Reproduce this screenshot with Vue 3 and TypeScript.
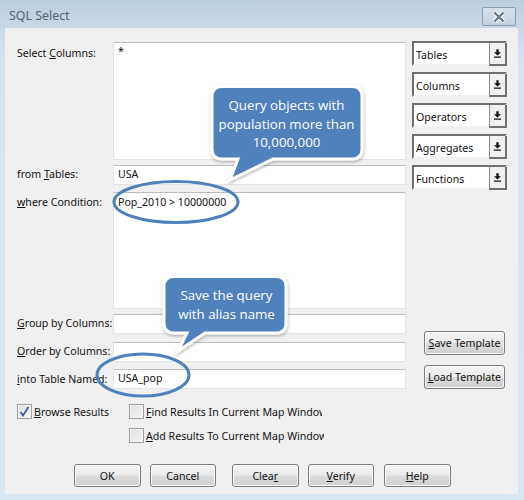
<template>
  <div class="window">
    <div class="titlebar">
      <span class="title">SQL Select</span>
      <button class="close-button" aria-label="Close">
        <svg width="14" height="12" viewBox="0 0 14 12">
          <path d="M2.5 1.5 L11.5 10.5 M11.5 1.5 L2.5 10.5" stroke="#fff" stroke-width="4.4" />
          <path d="M2.5 1.5 L11.5 10.5 M11.5 1.5 L2.5 10.5" stroke="#6d7a8a" stroke-width="2.4" />
        </svg>
      </button>
    </div>

    <div class="client">
      <div class="main">
        <div class="fields">
          <div class="row row-select">
            <label class="label"><span>Select <u>C</u>olumns:</span></label>
            <div class="box">*</div>
          </div>
          <div class="row row-from">
            <label class="label"><span>from <u>T</u>ables:</span></label>
            <div class="box">USA</div>
          </div>
          <div class="row row-where">
            <label class="label"><span><u>w</u>here Condition:</span></label>
            <div class="box">Pop_2010 &gt; 10000000</div>
          </div>
          <div class="row row-group">
            <label class="label"><span><u>G</u>roup by Columns:</span></label>
            <div class="box"></div>
          </div>
          <div class="row row-order">
            <label class="label"><span><u>O</u>rder by Columns:</span></label>
            <div class="box"></div>
          </div>
          <div class="row row-into">
            <label class="label"><span><u>i</u>nto Table Named:</span></label>
            <div class="box">USA_pop</div>
          </div>
        </div>

        <div class="side">
          <div class="dropdowns">
            <div v-for="name in dropdowns" :key="name" class="dropdown">
              <span class="dropdown-text">{{ name }}</span>
              <span class="dropdown-arrow">
                <svg width="7" height="9" viewBox="0 0 9 11">
                  <path d="M3 0 H6 V4 H9 L4.5 8 L0 4 H3 Z M0 9.5 H9 V11 H0 Z" fill="#111" />
                </svg>
              </span>
            </div>
          </div>
          <div class="templates">
            <button class="btn btn-template"><u>S</u>ave Template</button>
            <button class="btn btn-template"><u>L</u>oad Template</button>
          </div>
        </div>
      </div>

      <div class="options">
        <div class="check check-browse">
          <span class="checkbox">
            <svg width="11" height="11" viewBox="0 0 11 11">
              <path d="M1.5 6 L4 9.5 L9.5 1" fill="none" stroke="#3f5f9c" stroke-width="1.8" />
            </svg>
          </span>
          <span><u>B</u>rowse Results</span>
        </div>
        <div class="check-col">
          <div class="check check-find">
            <span class="checkbox"></span>
            <span class="clip"><u>F</u>ind Results In Current Map Window</span>
          </div>
          <div class="check check-add">
            <span class="checkbox"></span>
            <span class="clip"><u>A</u>dd Results To Current Map Window</span>
          </div>
        </div>
      </div>

      <div class="actions">
        <button class="btn btn-action">OK</button>
        <button class="btn btn-action gap-small">Cancel</button>
        <button class="btn btn-action gap-large">Clea<u>r</u></button>
        <button class="btn btn-action gap-small"><u>V</u>erify</button>
        <button class="btn btn-action gap-help"><u>H</u>elp</button>
      </div>
    </div>

    <!-- annotations drawn over the dialog -->
    <svg class="overlay" width="524" height="500" viewBox="0 0 524 500">
      <defs>
        <filter id="soft" x="-10%" y="-10%" width="120%" height="125%">
          <feDropShadow dx="0.5" dy="1.5" stdDeviation="1.5" flood-color="#000" flood-opacity="0.3" />
        </filter>
      </defs>
      <path
        d="M222 86.5 H352 Q362 86.5 362 96.5 V149 Q362 159 352 159 H273 L230 180 L238 159 H222 Q212 159 212 149 V96.5 Q212 86.5 222 86.5 Z"
        fill="#4f81bd" stroke="#fff" stroke-width="3" filter="url(#soft)"
      />
      <path
        d="M174 276.5 H276 Q286 276.5 286 286.5 V323 Q286 333 276 333 H205 L178 351 L187 333 H174 Q164 333 164 323 V286.5 Q164 276.5 174 276.5 Z"
        fill="#4f81bd" stroke="#fff" stroke-width="3" filter="url(#soft)"
      />
      <ellipse cx="176" cy="202" rx="62" ry="20.5" fill="none" stroke="#4f81bd" stroke-width="3" />
      <ellipse cx="143" cy="375" rx="46" ry="21" fill="none" stroke="#4f81bd" stroke-width="3" />
    </svg>

    <div class="callout callout-query">Query objects with<br />population more than<br />10,000,000</div>
    <div class="callout callout-save">Save the query<br />with alias name</div>
  </div>
</template>

<script setup lang="ts">
const dropdowns: string[] = ['Tables', 'Columns', 'Operators', 'Aggregates', 'Functions']
</script>

<style>
html,
body {
  margin: 0;
  background: #d6e4f2;
}
</style>

<style scoped>
.window {
  position: relative;
  width: 524px;
  height: 500px;
  box-sizing: border-box;
  padding: 0 6px 6px 5px;
  display: flex;
  flex-direction: column;
  overflow: hidden;
  font-family: "Noto Sans", "Liberation Sans", sans-serif;
  font-size: 10.6px;
  color: #111;
  background: linear-gradient(180deg, #bccddd 0, #c9d8e7 28px, #d6e4f2 60px, #d9e6f3 100%);
}

.titlebar {
  height: 28px;
  flex: none;
  display: flex;
  align-items: flex-start;
  justify-content: space-between;
  padding: 0 2px 0 4px;
}

.title {
  margin-top: 7px;
  font-size: 12.4px;
  color: #59636f;
}

.close-button {
  width: 34px;
  height: 19px;
  margin-top: 7px;
  padding: 0;
  display: flex;
  align-items: center;
  justify-content: center;
  border: 1px solid #8a9db3;
  border-radius: 2px;
  background: linear-gradient(180deg, #d8e2ec, #c3d0de);
}

.client {
  flex: 1;
  background: #f0f0f0;
  display: flex;
  flex-direction: column;
}

.main {
  display: flex;
  padding-top: 14px;
}

.fields {
  width: 401px;
  flex: none;
  display: flex;
  flex-direction: column;
}

.row {
  display: flex;
}

.label {
  width: 108px;
  flex: none;
  box-sizing: border-box;
  padding-left: 12px;
  white-space: nowrap;
}

.box {
  flex: 1;
  box-sizing: border-box;
  background: #fff;
  border: 1px solid #e4e4e8;
  border-top-color: #bdbdbd;
  padding: 1px 4px;
  line-height: 14px;
}

.row-select .box { height: 118px; }
.row-select .label { padding-top: 4px; }
.row-from { margin-top: 5px; align-items: center; }
.row-from .box { height: 20px; }
.row-from .label { padding-bottom: 3px; }
.row-where { margin-top: 7px; }
.row-where .label { padding-top: 3px; }
.row-where .box { height: 117px; padding-top: 2px; }
.row-group { margin-top: 5px; align-items: center; }
.row-group .box { height: 20px; }
.row-group .label { padding-bottom: 3px; }
.row-order { margin-top: 8px; align-items: center; }
.row-order .box { height: 20px; }
.row-order .label { padding-bottom: 3px; }
.row-into { margin-top: 7px; align-items: center; }
.row-into .box { height: 20px; }
.row-into .label { padding-bottom: 1px; }

.side {
  flex: 1;
  display: flex;
  flex-direction: column;
  justify-content: space-between;
  padding-left: 6px;
}

.dropdowns {
  display: flex;
  flex-direction: column;
  gap: 6px;
  margin-top: -1px;
}

.dropdown {
  width: 95px;
  height: 25px;
  box-sizing: border-box;
  display: flex;
  align-items: stretch;
  background: #fff;
  border: 2px solid;
  border-color: #6f6f6f #f2f2f2 #f2f2f2 #6f6f6f;
}

.dropdown-text {
  flex: 1;
  padding-left: 2px;
  line-height: 25px;
}

.dropdown-arrow {
  width: 15px;
  display: flex;
  align-items: center;
  justify-content: center;
  background: #f0f0f0;
  border-left: 1px solid #8c8c8c;
  border-right: 2px solid #6f6f6f;
  border-bottom: 2px solid #6f6f6f;
  margin-right: -2px;
  margin-bottom: -2px;
}

.templates {
  display: flex;
  flex-direction: column;
  gap: 10px;
  padding-left: 12px;
}

.btn {
  box-sizing: border-box;
  padding: 0;
  font: inherit;
  color: #111;
  border: 1px solid #7b7b7b;
  border-radius: 3px;
  background: linear-gradient(180deg, #f4f4f4 0, #ebebeb 48%, #dcdcdc 52%, #cfcfcf 100%);
  box-shadow: inset 0 0 0 1px #fbfbfb;
}

.btn-template {
  width: 81px;
  height: 24px;
}

.options {
  display: flex;
  padding: 15px 0 0 12px;
}

.check {
  display: flex;
  align-items: center;
  gap: 2px;
  white-space: nowrap;
}

.check-browse {
  width: 112px;
  align-self: flex-start;
}

.check-col {
  display: flex;
  flex-direction: column;
  gap: 9px;
}

.checkbox {
  width: 15px;
  height: 15px;
  flex: none;
  box-sizing: border-box;
  display: flex;
  align-items: center;
  justify-content: center;
  border: 1px solid #a0a0a0;
  background: linear-gradient(135deg, #dedede, #f6f6f6);
  box-shadow: inset 0 0 0 1px #f4f4f4;
}

.clip {
  display: block;
  overflow: hidden;
}

.check-find .clip { width: 176px; }
.check-add .clip { width: 178px; }

.actions {
  display: flex;
  padding: 21px 0 0 69px;
}

.btn-action {
  width: 66.5px;
  height: 23px;
}

.gap-small { margin-left: 9px; }
.gap-large { margin-left: 16px; }
.gap-help { margin-left: 10px; }

.overlay {
  position: absolute;
  left: 0;
  top: 0;
  pointer-events: none;
}

.callout {
  position: absolute;
  color: #fff;
  text-align: center;
  font-family: "Open Sans", "Liberation Sans", sans-serif;
  font-size: 13.3px;
  line-height: 18.5px;
}

.callout-query {
  left: 211px;
  top: 96px;
  width: 151px;
}

.callout-save {
  left: 165px;
  top: 286px;
  width: 123px;
}
</style>
